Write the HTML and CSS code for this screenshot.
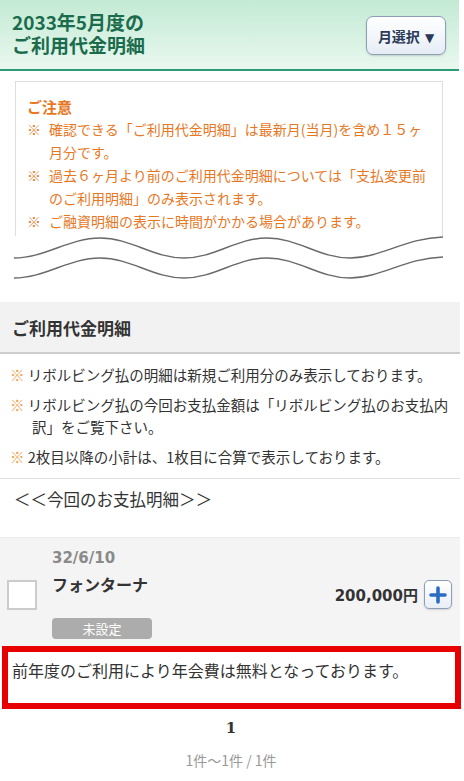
FILE: index.html
```html
<!DOCTYPE html>
<html lang="ja">
<head>
<meta charset="utf-8">
<title>ご利用代金明細</title>
<link rel="stylesheet" href="styles.css">
</head>
<body>
<div class="page">
  <header class="hd">
    <h1 class="hd-title"><span class="tl">2033年5月度の</span><span class="tl">ご利用代金明細</span></h1>
    <button class="month-btn" type="button">月選択<span class="tri">▼</span></button>
  </header>

  <div class="notice-wrap">
    <div class="notice">
      <p class="notice-title">ご注意</p>
      <ul class="notice-list">
        <li><span class="mark">※</span><span class="nt">確認できる「ご利用代金明細」は最新月(当月)を含め１５ヶ<br>月分です。</span></li>
        <li><span class="mark">※</span><span class="nt">過去６ヶ月より前のご利用代金明細については「支払変更前<br>のご利用明細」のみ表示されます。</span></li>
        <li><span class="mark">※</span><span class="nt">ご融資明細の表示に時間がかかる場合があります。</span></li>
      </ul>
    </div>
    <svg class="wave" width="460" height="46" viewBox="0 0 460 46">
      <path d="M14,22 C45,22 69,2 100,2 C131,2 153,22 184,22 C215,22 236,2 267,2 C298,2 319,22 350,22 C381,22 405,2 443,1" fill="none" stroke="#6a6a6a" stroke-width="1.5"/>
      <path d="M14,42 C45,42 69,22 100,22 C131,22 153,42 184,42 C215,42 236,22 267,22 C298,22 319,42 350,42 C381,42 405,22 443,21" fill="none" stroke="#6a6a6a" stroke-width="1.5"/>
    </svg>
  </div>

  <h2 class="sec-head">ご利用代金明細</h2>

  <ul class="notes">
    <li><span class="omark">※</span> リボルビング払の明細は新規ご利用分のみ表示しております。</li>
    <li><span class="omark">※</span> リボルビング払の今回お支払金額は「リボルビング払のお支払内<br>訳」をご覧下さい。</li>
    <li><span class="omark">※</span> 2枚目以降の小計は、1枚目に合算で表示しております。</li>
  </ul>

  <div class="pay-title">＜＜今回のお支払明細＞＞</div>

  <div class="item">
    <span class="check"></span>
    <div class="item-main">
      <div class="date">32/6/10</div>
      <div class="shop">フォンターナ</div>
      <span class="badge">未設定</span>
    </div>
    <div class="amount">200,000円</div>
    <button class="plus" type="button" aria-label="詳細">
      <svg width="18" height="18" viewBox="0 0 18 18"><path d="M9 2v14M2 9h14" stroke="#2a6cc4" stroke-width="3.6" stroke-linecap="round"/></svg>
    </button>
  </div>

  <div class="highlight">前年度のご利用により年会費は無料となっております。</div>

  <div class="pager">1</div>
  <div class="count">1件～1件 / 1件</div>
</div>
</body>
</html>
```

FILE: styles.css
```css
* { box-sizing: border-box; }
html, body { margin: 0; padding: 0; background: #fff; }
body {
  font-family: "Noto Sans CJK JP", "DejaVu Sans", sans-serif;
  color: #333;
}
.page { width: 462px; }

.hd {
  display: flex;
  justify-content: space-between;
  align-items: center;
  height: 71px;
  padding: 0 13px 2px 12px;
  background: linear-gradient(#c3ead4, #e9f8ef);
  border-bottom: 2px solid #2a9a77;
  width: 459px;
}
.hd-title {
  margin: 0;
  font-size: 19px;
  font-weight: 700;
  color: #1b6c4d;
  display: flex;
  flex-direction: column;
  gap: 1px;
}
.tl { display: block; line-height: 22px; height: 22px; }
.month-btn {
  width: 80px;
  height: 39px;
  border: 1px solid #8c9db8;
  border-radius: 7px;
  background: linear-gradient(#ffffff, #e6edf5);
  box-shadow: 0 1px 2px rgba(0,0,0,0.15);
  font-family: "Noto Sans CJK JP", sans-serif;
  font-size: 14px;
  font-weight: 700;
  color: #2b3a58;
  padding: 0;
  margin-top: 4px;
}
.tri { font-size: 12px; font-family: "DejaVu Sans", sans-serif; margin-left: 5px; }

.notice-wrap { padding: 10px 0 0 0; }
.notice {
  margin: 0 19px 0 15px;
  border: 1px solid #dedede;
  border-bottom: none;
  padding: 13px 10px 3px 11px;
  color: #e8781f;
  font-size: 14px;
  line-height: 23px;
}
.notice-title { margin: 0; font-weight: 700; font-size: 15px; }
.notice-list { list-style: none; margin: 0; padding: 0; }
.notice-list li { display: flex; }
.mark { width: 22px; flex: none; font-family: "Noto Sans CJK JP", sans-serif; }
.wave { display: block; margin-top: 0; }

.sec-head {
  margin: 20px 0 0 0;
  height: 52px;
  background: #f2f2f2;
  border-bottom: 2px solid #cdcdcd;
  font-size: 17px;
  font-weight: 700;
  line-height: 52px;
  padding-left: 12px;
  color: #333;
  width: 460px;
}

.notes {
  list-style: none;
  margin: 0;
  padding: 10px 0 10px 0;
  font-size: 14.5px;
  line-height: 22px;
  border-bottom: 1px solid #e2e2e2;
  width: 460px;
}
.notes li {
  padding-left: 32px;
  text-indent: -22px;
  margin-bottom: 8px;
}
.notes li:last-child { margin-bottom: 0; }
.omark { color: #f0a04a; }

.pay-title {
  font-size: 16.5px;
  line-height: 24px;
  padding: 8px 0 0 14px;
  height: 59px;
  color: #333;
  border-bottom: 1px solid #ebebeb;
  width: 460px;
}

.item {
  display: flex;
  align-items: center;
  background: #f4f4f4;
  padding: 10px 8px 7px 7px;
  width: 460px;
}
.check {
  width: 30px;
  height: 30px;
  background: #fff;
  border: 2px solid #cccccc;
  flex: none;
  margin-top: 2px;
}
.item-main { flex: 1; margin-left: 15px; }
.date {
  font-family: "DejaVu Sans", sans-serif;
  font-size: 15px;
  font-weight: 700;
  color: #8a8a8a;
  line-height: 20px;
}
.shop {
  margin-top: 5px;
  font-size: 16px;
  font-weight: 700;
  line-height: 22px;
  color: #333;
}
.badge {
  display: block;
  margin-top: 23px;
  width: 100px;
  height: 21px;
  background: #acacac;
  border-radius: 4px;
  color: #fff;
  font-size: 13px;
  line-height: 21px;
  text-align: center;
}
.amount {
  font-family: "DejaVu Sans", "Noto Sans CJK JP", sans-serif;
  font-size: 15px;
  font-weight: 700;
  color: #333;
  margin-right: 6px;
  margin-top: 2px;
}
.plus {
  width: 28px;
  height: 29px;
  border: 1px solid #8c9db8;
  border-radius: 5px;
  background: linear-gradient(#ffffff, #e9eef5);
  box-shadow: 0 1px 2px rgba(0,0,0,0.15);
  padding: 0;
  display: flex;
  align-items: center;
  justify-content: center;
  margin-top: 2px;
}

.highlight {
  margin-left: 2px;
  width: 459px;
  border: 6px solid #e80000;
  padding: 6px 4px 21px 4px;
  font-size: 16px;
  line-height: 24px;
  color: #333;
  background: #fff;
}

.pager {
  text-align: center;
  font-family: "DejaVu Serif", serif;
  font-weight: 700;
  font-size: 15px;
  color: #333;
  margin-top: 9px;
  line-height: 20px;
}
.count {
  text-align: center;
  font-size: 14px;
  color: #999;
  margin-top: 12px;
  line-height: 20px;
}
```
